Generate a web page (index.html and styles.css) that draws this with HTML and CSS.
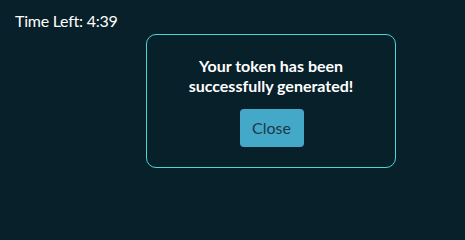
FILE: index.html
```html
<!DOCTYPE html>
<html>
<head>
<meta charset="utf-8">
<link rel="stylesheet" href="styles.css">
</head>
<body>
<div class="page">
  <div class="timer">Time Left: 4:39</div>
  <div class="modal">
    <p class="message">Your token has been successfully generated!</p>
    <button class="close-btn" type="button">Close</button>
  </div>
</div>
</body>
</html>
```

FILE: styles.css
```css
html, body {
  margin: 0;
  padding: 0;
  background: #08202a;
}
body {
  font-family: Lato, "Open Sans", "Liberation Sans", sans-serif;
  color: #ffffff;
}
.page {
  width: 465px;
  height: 202px;
  box-sizing: border-box;
  padding: 10px 15px;
  display: flex;
  flex-direction: column;
  align-items: flex-start;
}
.timer {
  font-size: 16px;
  line-height: 22px;
  letter-spacing: -0.25px;
  color: #ffffff;
}
.modal {
  margin-top: 2px;
  margin-left: 131px;
  width: 250px;
  box-sizing: border-box;
  border: 1px solid #4dd6d8;
  border-radius: 10px;
  padding: 21px 20px 20px;
  display: flex;
  flex-direction: column;
  align-items: center;
}
.message {
  margin: 0 0 13px;
  font-size: 16px;
  font-weight: 700;
  line-height: 20px;
  text-align: center;
  color: #ffffff;
}
.close-btn {
  font-family: inherit;
  font-size: 16px;
  line-height: 24px;
  padding: 6px 12px;
  width: 64px;
  height: 38px;
  margin-left: 1px;
  border: none;
  border-radius: 4px;
  background: #44a9c9;
  color: #1c3746;
}
```
